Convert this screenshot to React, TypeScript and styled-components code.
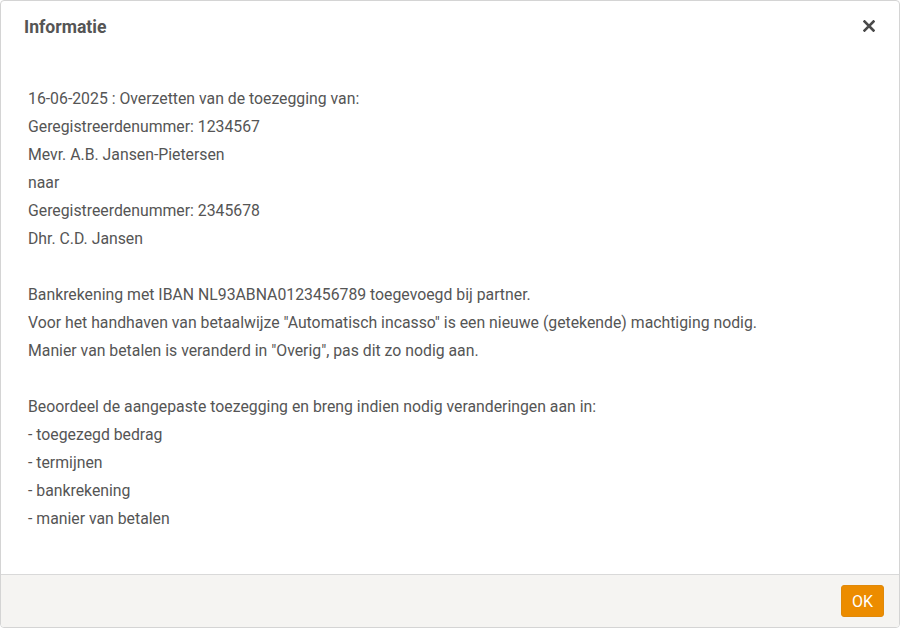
import styled, { createGlobalStyle } from "styled-components";

const GlobalStyle = createGlobalStyle`
  html, body {
    margin: 0;
    padding: 0;
    background: #ffffff;
  }

  body {
    font-family: Roboto, "Liberation Sans", sans-serif;
  }
`;

const blocks: string[][] = [
  [
    "16-06-2025 : Overzetten van de toezegging van:",
    "Geregistreerdenummer: 1234567",
    "Mevr. A.B. Jansen-Pietersen",
    "naar",
    "Geregistreerdenummer: 2345678",
    "Dhr. C.D. Jansen",
  ],
  [
    "Bankrekening met IBAN NL93ABNA0123456789 toegevoegd bij partner.",
    'Voor het handhaven van betaalwijze "Automatisch incasso" is een nieuwe (getekende) machtiging nodig.',
    'Manier van betalen is veranderd in "Overig", pas dit zo nodig aan.',
  ],
  [
    "Beoordeel de aangepaste toezegging en breng indien nodig veranderingen aan in:",
    "- toegezegd bedrag",
    "- termijnen",
    "- bankrekening",
    "- manier van betalen",
  ],
];

const App = () => {
  return (
    <>
      <GlobalStyle />
      <Dialog>
        <Header>
          <Title>Informatie</Title>
          <Close aria-label="Sluiten">
            <svg width="12" height="12" viewBox="0 0 12 12">
              <path
                d="M1.5 1.5 L10.5 10.5 M10.5 1.5 L1.5 10.5"
                stroke="#4a4a4a"
                strokeWidth="2.6"
                strokeLinecap="square"
              />
            </svg>
          </Close>
        </Header>

        <Body>
          {blocks.map((lines, i) => (
            <Block key={i}>
              {lines.map((line) => (
                <Line key={line}>{line}</Line>
              ))}
            </Block>
          ))}
        </Body>

        <Footer>
          <OkButton>OK</OkButton>
        </Footer>
      </Dialog>
    </>
  );
};

const Dialog = styled.div`
  width: 900px;
  height: 628px;
  box-sizing: border-box;

  border: 1px solid #d4d4d4;
  border-radius: 4px;
  overflow: hidden;

  display: flex;
  flex-direction: column;
  background: #ffffff;
`;

const Header = styled.div`
  height: 52px;
  display: flex;
  align-items: center;
  justify-content: space-between;
  padding: 0 24px 0 23px;
  flex-shrink: 0;
`;

const Title = styled.h2`
  margin: 0;
  font-size: 17.6px;
  font-weight: 700;
  color: #555555;
`;

const Close = styled.button`
  border: none;
  background: none;
  padding: 0;
  width: 12px;
  height: 12px;
  display: flex;
  margin-top: -3px;
  cursor: pointer;
`;

const Body = styled.div`
  flex: 1;
  padding: 32px 27px 0 27px;
  display: flex;
  flex-direction: column;
  gap: 28px;
`;

const Block = styled.div`
  display: flex;
  flex-direction: column;
`;

const Line = styled.p`
  margin: 0;
  font-size: 15.8px;
  line-height: 28px;
  color: #555555;
`;

const Footer = styled.div`
  height: 52px;
  flex-shrink: 0;
  border-top: 1px solid #d9d9d9;
  background: #f5f4f2;

  display: flex;
  align-items: center;
  justify-content: flex-end;
  padding: 0 15px;
`;

const OkButton = styled.button`
  height: 32px;
  padding: 0 10px;
  border: 1px solid #e0890a;
  border-radius: 3px;
  background: #ec8c00;
  color: #ffffff;
  font-family: Roboto, "Liberation Sans", sans-serif;
  font-size: 16px;
  cursor: pointer;
`;

export default App;
